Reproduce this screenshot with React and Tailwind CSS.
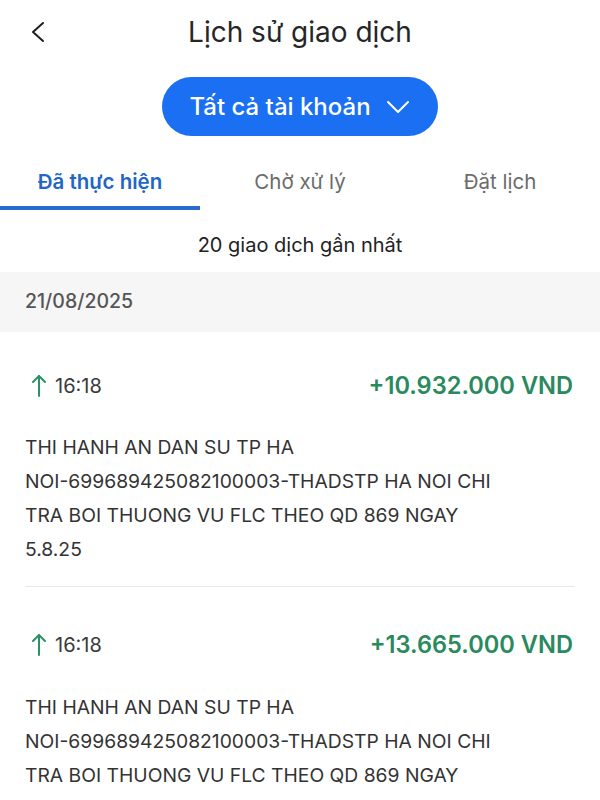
const descLines = [
  'THI HANH AN DAN SU TP HA',
  'NOI-699689425082100003-THADSTP HA NOI CHI',
  'TRA BOI THUONG VU FLC THEO QD 869 NGAY',
  '5.8.25',
]

const transactions = [
  { id: 1, time: '16:18', amount: '+10.932.000 VND', lines: descLines },
  { id: 2, time: '16:18', amount: '+13.665.000 VND', lines: descLines },
]

const tabs = ['Đã thực hiện', 'Chờ xử lý', 'Đặt lịch']

const BackIcon = () => (
  <svg width="14" height="22" viewBox="0 0 14 22" fill="none" stroke="#1f1f1f" strokeWidth="2" strokeLinecap="round" strokeLinejoin="round">
    <polyline points="12,2 2,11 12,20" />
  </svg>
)

const DownIcon = () => (
  <svg width="24" height="14" viewBox="0 0 24 14" fill="none" stroke="white" strokeWidth="2" strokeLinecap="round" strokeLinejoin="round">
    <polyline points="2,2 12,12 22,2" />
  </svg>
)

const UpArrow = () => (
  <svg width="14" height="24" viewBox="0 0 14 24" fill="none" stroke="#2a9366" strokeWidth="2" strokeLinecap="round" strokeLinejoin="round">
    <line x1="7" y1="2" x2="7" y2="22" />
    <polyline points="1,8 7,2 13,8" />
  </svg>
)

const TransactionRow = ({ tx, first, last }) => (
  <div className="px-[25px]">
    <div className={first ? 'flex items-center justify-between pt-[36px]' : 'flex items-center justify-between pt-[40px]'}>
      <div className="flex items-center gap-[9px] pl-[7px]">
        <UpArrow />
        <span className="text-[20px] text-[#3a3a3a]">{tx.time}</span>
      </div>
      <span className="mr-[2px] text-[23.6px] font-semibold text-[#2a8a5e]">{tx.amount}</span>
    </div>
    <p className="mt-[27px] text-[19.3px] leading-[34px] text-[#333]">
      {tx.lines.map((l, i) => (
        <span key={i} className="block whitespace-nowrap">{l}</span>
      ))}
    </p>
    {!last && <div className="mt-[20px] h-px bg-[#e8e8e8]" />}
  </div>
)

export default function App() {
  return (
    <div className="w-[600px] h-[800px] overflow-hidden bg-white font-['Inter',sans-serif]">
      {/* Header */}
      <div className="relative flex items-center justify-center h-[64px]">
        <div className="absolute left-[31px] top-[21px]">
          <BackIcon />
        </div>
        <h1 className="text-[28px] text-[#262626]">Lịch sử giao dịch</h1>
      </div>

      <div className="flex justify-center mt-[13px]">
        <button className="flex items-center gap-[15px] h-[59px] pl-[27px] pr-[28px] rounded-full bg-[#1a6ff2] text-white">
          <span className="text-[24px] font-medium">Tất cả tài khoản</span>
          <DownIcon />
        </button>
      </div>

      {/* Tabs */}
      <div className="grid grid-cols-3 mt-[22px]">
        {tabs.map((t, i) => (
          <div key={t} className="flex flex-col items-center">
            <span
              className={
                i === 0
                  ? 'h-[48px] flex items-center text-[20.5px] font-semibold text-[#2166c4]'
                  : 'h-[48px] flex items-center text-[20.5px] text-[#6b6b6b]'
              }
            >
              {t}
            </span>
            <div className={i === 0 ? 'h-[4px] w-full bg-[#2a6ad0]' : 'h-[4px] w-full'} />
          </div>
        ))}
      </div>

      <p className="text-center text-[20px] text-[#222] mt-[20px]">20 giao dịch gần nhất</p>

      <div className="mt-[12px] bg-[#f6f6f6] h-[60px] flex items-center px-[25px]">
        <span className="text-[19.5px] font-medium text-[#555]">21/08/2025</span>
      </div>

      {transactions.map((tx, i) => (
        <TransactionRow key={tx.id} tx={tx} first={i === 0} last={i === transactions.length - 1} />
      ))}
    </div>
  )
}
